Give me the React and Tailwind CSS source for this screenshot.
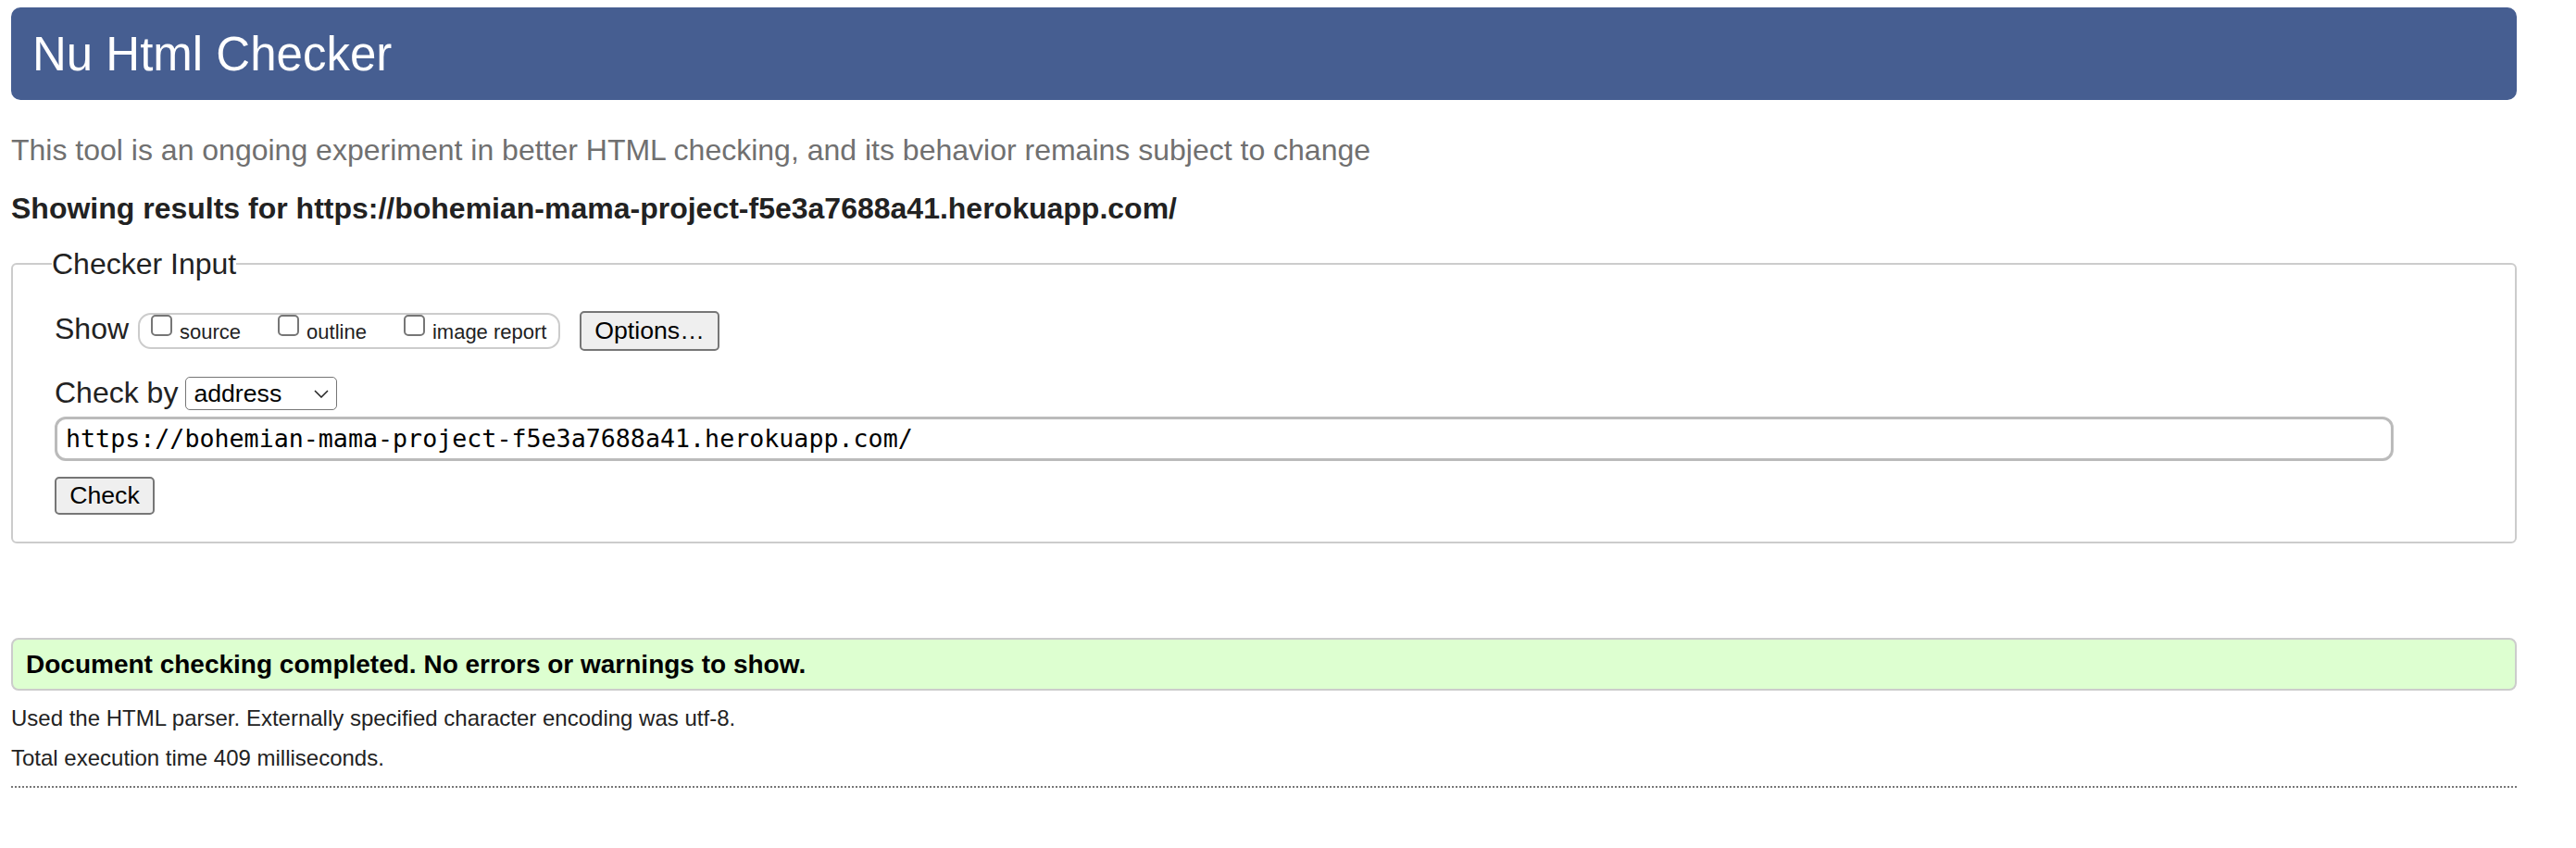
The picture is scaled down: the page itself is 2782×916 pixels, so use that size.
import React from 'react';

const sans = "font-['Liberation_Sans',Arial,sans-serif]";

const Box = () => (
  <span className="w-[23px] h-[23px] shrink-0 rounded-[5px] border-2 border-[#767676] bg-white" />
);

const Toggle = ({ label, className = '' }) => (
  <label className={`flex items-start ${className}`}>
    <Box />
    <span className="ml-[8px] mt-[8px] text-[22px] leading-[22px] text-[#222]">{label}</span>
  </label>
);

export default function App() {
  return (
    <div className={`${sans} bg-white min-h-[916px] pl-[12px] pr-[64px] pt-[8px] text-[#222]`}>
      {/* Title bar */}
      <div className="h-[100px] rounded-[10px] bg-[#465e91] flex items-center pl-[23px]">
        <h1 className="text-white text-[51px] leading-none">Nu Html Checker</h1>
      </div>

      <p className="mt-[35px] text-[32px] leading-[38px] text-[#707070]">
        This tool is an ongoing experiment in better HTML checking, and its behavior remains subject to change
      </p>
      <p className="mt-[25px] text-[32px] leading-[38px] font-bold text-[#222]">
        Showing results for https://bohemian-mama-project-f5e3a7688a41.herokuapp.com/
      </p>

      {/* Checker input */}
      <fieldset className="mt-[22px] border-2 border-[#cccccc] rounded-[6px] pl-[45px] pt-[32px] pb-[29px]">
        <legend className="ml-[-3px] text-[32px] leading-[38px] text-[#222]">Checker Input</legend>

        <div className="flex items-center h-[43px]">
          <span className="text-[32px] leading-none pb-[6px]">Show</span>
          <div className="ml-[10px] h-[39px] w-[456px] rounded-[14px] border-2 border-[#cccccc] flex items-start pl-[12px]">
            <Toggle label="source" />
            <Toggle label="outline" className="ml-[40px]" />
            <Toggle label="image report" className="ml-[40px]" />
          </div>
          <button className="ml-[21px] h-[43px] w-[151px] rounded-[5px] border-2 border-[#767676] bg-[#efefef] text-[26.67px] leading-none text-black">
            Options…
          </button>
        </div>

        <div className="mt-[28px] flex items-center h-[36px]">
          <span className="text-[32px] leading-none pb-[2px]">Check by</span>
          <div className="ml-[8px] h-[36px] w-[164px] rounded-[5px] border-[1.5px] border-[#767676] bg-white flex items-center justify-between pl-[8px] pr-[8px]">
            <span className="text-[26.67px] leading-none text-black">address</span>
            <svg width="16" height="9" viewBox="0 0 16 9" fill="none" stroke="#222" strokeWidth="1.5">
              <polyline points="1,1 8,8 15,1" />
            </svg>
          </div>
        </div>

        <div className="mt-[7px] h-[48px] w-[2526px] rounded-[12px] border-[3px] border-[#bbbbbb] flex items-center pl-[9px]">
          <span className="font-['DejaVu_Sans_Mono',monospace] text-[26.67px] leading-none text-black">
            https://bohemian-mama-project-f5e3a7688a41.herokuapp.com/
          </span>
        </div>

        <button className="mt-[17px] h-[41px] w-[108px] rounded-[5px] border-2 border-[#767676] bg-[#efefef] text-[26.67px] leading-none text-black block">
          Check
        </button>
      </fieldset>

      {/* Result */}
      <div className="mt-[102px] h-[57px] rounded-[8px] border-2 border-[#cccccc] bg-[#ddffd0] flex items-center pl-[14px]">
        <p className="font-bold text-[28px] leading-none text-black">
          Document checking completed. No errors or warnings to show.
        </p>
      </div>

      <p className="mt-[15px] text-[24px] leading-[30px] text-[#222]">
        Used the HTML parser. Externally specified character encoding was utf-8.
      </p>
      <p className="mt-[13px] text-[24px] leading-[30px] text-[#222]">
        Total execution time 409 milliseconds.
      </p>
      <div className="mt-[15px] border-t-2 border-dotted border-[#777777]" />
    </div>
  );
}
